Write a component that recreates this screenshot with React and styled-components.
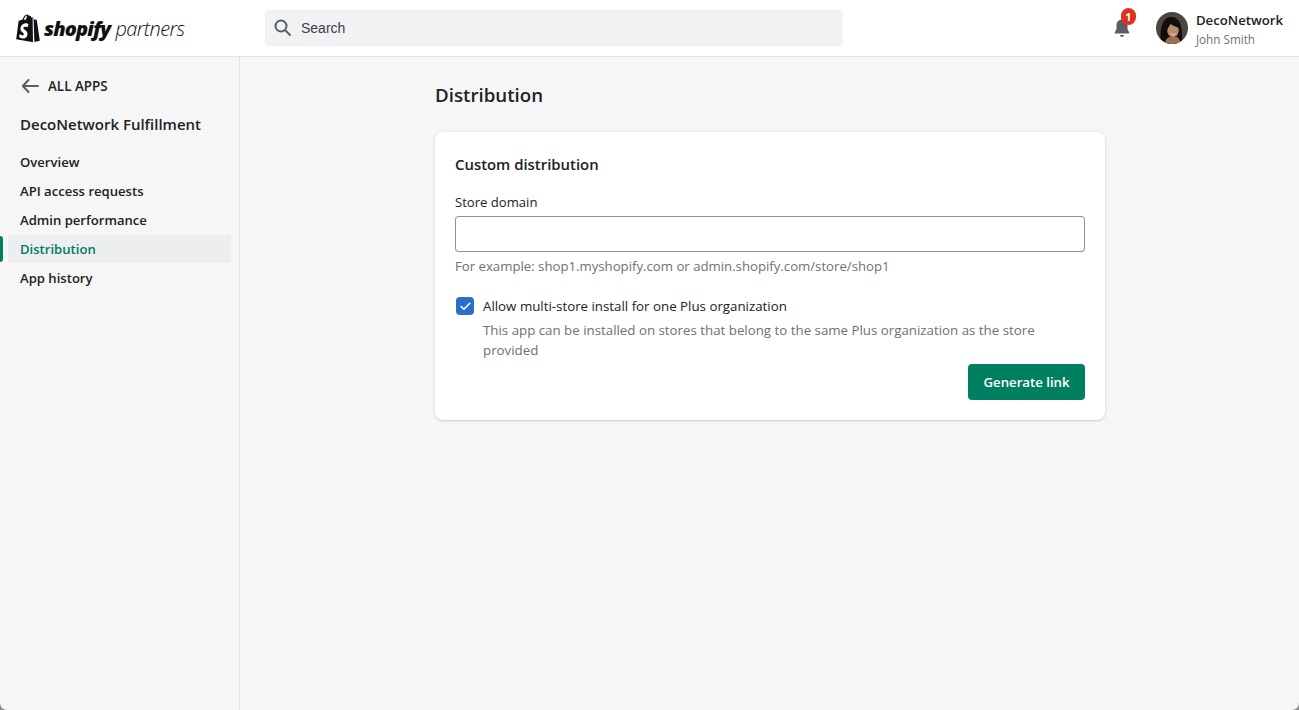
import React from 'react'
import styled, { createGlobalStyle } from 'styled-components'
import { Check } from 'lucide-react'

const UI_FONT = '"Open Sans", "Noto Sans", sans-serif'

const nav = ['Overview', 'API access requests', 'Admin performance', 'Distribution', 'App history']

const App = () => {
  return (
    <>
      <GlobalStyle />
      <Page>
        <TopBar>
          <Logo>
            <BagIcon />
            <LogoBold>shopify</LogoBold>
            <LogoThin>partners</LogoThin>
          </Logo>
          <SearchBox>
            <SearchIcon />
            <SearchLabel>Search</SearchLabel>
          </SearchBox>
          <TopRight>
            <BellWrap>
              <BellIcon />
              <Badge>1</Badge>
            </BellWrap>
            <Avatar />
            <UserInfo>
              <UserName>DecoNetwork</UserName>
              <UserSub>John Smith</UserSub>
            </UserInfo>
          </TopRight>
        </TopBar>
        <Body>
          <Sidebar>
            <BackLink>
              <ArrowIcon />
              <span>ALL APPS</span>
            </BackLink>
            <AppName>DecoNetwork Fulfillment</AppName>
            <NavList>
              {nav.map((item) => (
                <NavItem key={item} $active={item === 'Distribution'}>
                  {item}
                </NavItem>
              ))}
            </NavList>
          </Sidebar>
          <Main>
            <Column>
              <PageTitle>Distribution</PageTitle>
              <Card>
                <CardTitle>Custom distribution</CardTitle>
                <FieldLabel>Store domain</FieldLabel>
                <TextInput type="text" />
                <HelpText>For example: shop1.myshopify.com or admin.shopify.com/store/shop1</HelpText>
                <CheckRow>
                  <CheckBox>
                    <Check size={13} strokeWidth={3} color="#fff" />
                  </CheckBox>
                  <CheckLabel>Allow multi-store install for one Plus organization</CheckLabel>
                </CheckRow>
                <CheckHelp>
                  This app can be installed on stores that belong to the same Plus organization as the store provided
                </CheckHelp>
                <Actions>
                  <PrimaryButton>Generate link</PrimaryButton>
                </Actions>
              </Card>
            </Column>
          </Main>
        </Body>
      </Page>
    </>
  )
}

const BagIcon = () => (
  <svg width="24" height="28" viewBox="0 0 24 28">
    <path
      d="M16.6 3.2 15.4 3.6C14.9 2.2 14.1 1.4 13 1.4h-.3C12.300 .8 11.700 .5 11.200 .5 8.500 .5 7.100 3.900 6.700 5.600L3.600 6.600C2.700 6.900 2.600 6.900 2.500 7.800L.2 25.200 17 28.200Z"
      fill="#111"
    />
    <path d="M17.500 3.200 18.400 28 23.800 26.700 20.800 6.200C20.700 5.900 20.500 5.800 20.300 5.700L18.300 5.600 16.900 3.400Z" fill="#111" />
    <path
      d="M12.500 10.600 11.500 13.300C11.500 13.300 10.500 12.800 9.300 12.800 7.500 12.800 7.400 13.900 7.400 14.200 7.400 15.700 11.500 16.300 11.500 19.900 11.500 22.700 9.700 24.500 7.300 24.500 4.400 24.500 3 22.700 3 22.700L3.800 20.100C3.800 20.100 5.300 21.400 6.600 21.400 7.500 21.400 7.800 20.700 7.800 20.200 7.800 18.200 4.500 18.100 4.500 14.800 4.500 12 6.500 9.300 10.500 9.300 12 9.300 12.500 10.600 12.500 10.600Z"
      fill="#fff"
    />
    <path d="M8 6 8.300 4.600C8.800 3 9.800 1.700 11 1.500 10.800 3 10.400 4.500 10 5.400Z" fill="#fff" />
  </svg>
)

const SearchIcon = () => (
  <svg width="20" height="20" viewBox="0 0 20 20" fill="none" stroke="#5c5f62" strokeWidth="2" strokeLinecap="round">
    <circle cx="8" cy="8" r="5.500" />
    <path d="M12.300 12.300 17 17" />
  </svg>
)

const BellIcon = () => (
  <svg width="20" height="20" viewBox="0 0 20 20" fill="#5c5f62">
    <path d="M10 1.500C6.700 1.500 4.500 4 4.500 7.200V11L2.800 14.500C2.500 15.100 2.800 15.500 3.400 15.500H16.600C17.200 15.500 17.500 15.100 17.200 14.500L15.500 11V7.200C15.500 4 13.300 1.500 10 1.500Z" />
    <path d="M8 17H12C12 18.200 11 19 10 19S8 18.200 8 17Z" />
  </svg>
)

const ArrowIcon = () => (
  <svg width="20" height="20" viewBox="0 0 20 20" fill="none" stroke="#5c5f62" strokeWidth="2" strokeLinecap="round" strokeLinejoin="round">
    <path d="M3 10H18M8.500 4 2.800 10 8.500 16" />
  </svg>
)

const Avatar = () => (
  <AvatarFrame>
    <svg width="32" height="32" viewBox="0 0 32 32">
      <rect width="32" height="32" fill="#4b463f" />
      <path d="M5 32C3 16 7 5 15 5S27 12 26 32Z" fill="#120d0b" />
      <path d="M9 32C9 28 11 26 13 25L21 25C23 26 24 28 25 32Z" fill="#9c7058" />
      <ellipse cx="17" cy="18" rx="5.800" ry="7.300" fill="#b98b70" />
      <path d="M11 18C11 13 13 10 17 9 20 9 23 12 23 16 20 15 16 13 14.500 12 13.500 14 12 16 11 18Z" fill="#120d0b" />
      <path d="M14 21.500C16 23.300 18.500 23.300 20.500 21.500 18.500 22 16 22 14 21.500Z" fill="#f3e8de" />
    </svg>
  </AvatarFrame>
)

const GlobalStyle = createGlobalStyle`
  html, body {
    margin: 0;
    padding: 0;
    height: 100%;
    background: #8a8a8a;
  }

  * {
    box-sizing: border-box;
  }
`

const Page = styled.div`
  display: flex;
  flex-direction: column;
  height: 710px;
  overflow: hidden;
  background: #f6f6f7;
  border-radius: 0 0 7px 7px;
  font-family: ${UI_FONT};
  color: #202223;
`

const TopBar = styled.header`
  display: flex;
  align-items: center;
  flex: 0 0 57px;
  background: #fff;
  border-bottom: 1px solid #dfe1e4;
`

const Logo = styled.div`
  display: flex;
  align-items: center;
  width: 265px;
  padding-left: 16px;
  color: #111;
`

const LogoBold = styled.span`
  margin-left: 4px;
  font-family: "Open Sans", sans-serif;
  font-size: 20px;
  font-style: italic;
  font-weight: 800;
  letter-spacing: -0.85px;
`

const LogoThin = styled.span`
  margin-left: 5px;
  font-family: "Open Sans", sans-serif;
  font-size: 20px;
  font-style: italic;
  font-weight: 300;
  letter-spacing: -0.6px;
`

const SearchBox = styled.div`
  display: flex;
  align-items: center;
  gap: 8px;
  width: 578px;
  height: 36px;
  padding-left: 8px;
  background: #f1f2f3;
  border-radius: 4px;
`

const SearchLabel = styled.span`
  font-family: "Liberation Sans", Arial, sans-serif;
  font-size: 14px;
  color: #3d4043;
`

const TopRight = styled.div`
  display: flex;
  align-items: center;
  margin-left: auto;
  padding-right: 16px;
`

const BellWrap = styled.div`
  position: relative;
  display: flex;
  margin-right: 24px;
`

const Badge = styled.span`
  position: absolute;
  top: -10px;
  right: -4px;
  width: 15px;
  height: 17px;
  border-radius: 8px;
  background: #e0301e;
  color: #fff;
  font-size: 11px;
  font-weight: 700;
  line-height: 17px;
  text-align: center;
`

const AvatarFrame = styled.div`
  width: 32px;
  height: 32px;
  margin-right: 8px;
  border-radius: 50%;
  overflow: hidden;
`

const UserInfo = styled.div`
  display: flex;
  flex-direction: column;
`

const UserName = styled.span`
  font-size: 13.2px;
  font-weight: 600;
  line-height: 20px;
`

const UserSub = styled.span`
  margin-top: 1px;
  font-size: 11.7px;
  line-height: 16px;
  color: #6d7175;
`

const Body = styled.div`
  display: flex;
  flex: 1;
  min-height: 0;
`

const Sidebar = styled.aside`
  flex: 0 0 240px;
  padding-top: 19px;
  border-right: 1px solid #dfe1e4;
`

const BackLink = styled.div`
  display: flex;
  align-items: center;
  gap: 8px;
  height: 20px;
  padding-left: 20px;
  font-size: 13.4px;
  font-weight: 600;
`

const AppName = styled.div`
  margin-top: 16px;
  padding-left: 20px;
  font-size: 15px;
  font-weight: 600;
  line-height: 24px;
`

const NavList = styled.nav`
  display: flex;
  flex-direction: column;
  margin-top: 12px;
  padding-right: 8px;
`

const NavItem = styled.div`
  position: relative;
  height: 28px;
  margin: 0 0 1px 8px;
  padding-left: 12px;
  font-size: 13.1px;
  font-weight: 600;
  line-height: 28px;
  color: ${({ $active }) => ($active ? '#007a5c' : '#202223')};
  background: ${({ $active }) => ($active ? '#edeeef' : 'transparent')};

  &::before {
    content: '';
    display: ${({ $active }) => ($active ? 'block' : 'none')};
    position: absolute;
    left: -8px;
    top: 1px;
    width: 3px;
    height: 26px;
    border-radius: 0 3px 3px 0;
    background: #008060;
  }
`

const Main = styled.main`
  flex: 1;
  display: flex;
  justify-content: center;
  padding-left: 1px;
`

const Column = styled.div`
  width: 670px;
  padding-top: 24px;
`

const PageTitle = styled.h1`
  margin: 0 0 23px;
  font-size: 18.7px;
  font-weight: 600;
  line-height: 28px;
`

const Card = styled.section`
  padding: 20px;
  height: 288px;
  background: #fff;
  border-radius: 8px;
  box-shadow: 0 0 5px rgba(23, 24, 24, 0.05), 0 1px 2px rgba(0, 0, 0, 0.15);
`

const CardTitle = styled.h2`
  margin: 0 0 16px;
  font-size: 14.9px;
  font-weight: 600;
  line-height: 24px;
`

const FieldLabel = styled.div`
  font-size: 13.1px;
  line-height: 20px;
  margin-bottom: 4px;
`

const TextInput = styled.input`
  display: block;
  width: 100%;
  height: 36px;
  background: #fff;
  border: 1px solid #8c9196;
  border-top-color: #898f94;
  border-radius: 4px;
  outline: none;
`

const HelpText = styled.div`
  margin-top: 4px;
  font-size: 13.2px;
  line-height: 20px;
  color: #6d7175;
`

const CheckRow = styled.div`
  display: flex;
  align-items: center;
  gap: 9px;
  margin-top: 20px;
  padding-left: 1px;
  height: 20px;
`

const CheckBox = styled.div`
  display: flex;
  align-items: center;
  justify-content: center;
  width: 18px;
  height: 18px;
  border-radius: 4px;
  background: #2c6ecb;
`

const CheckLabel = styled.span`
  font-size: 13.3px;
  line-height: 20px;
`

const CheckHelp = styled.div`
  margin-top: 4px;
  padding-left: 28px;
  font-size: 13.3px;
  line-height: 20px;
  color: #6d7175;
`

const Actions = styled.div`
  display: flex;
  justify-content: flex-end;
  margin-top: 4px;
`

const PrimaryButton = styled.button`
  width: 117px;
  height: 36px;
  border: none;
  border-radius: 4px;
  background: #008060;
  color: #fff;
  font-family: ${UI_FONT};
  font-size: 13.2px;
  font-weight: 600;
`

export default App
